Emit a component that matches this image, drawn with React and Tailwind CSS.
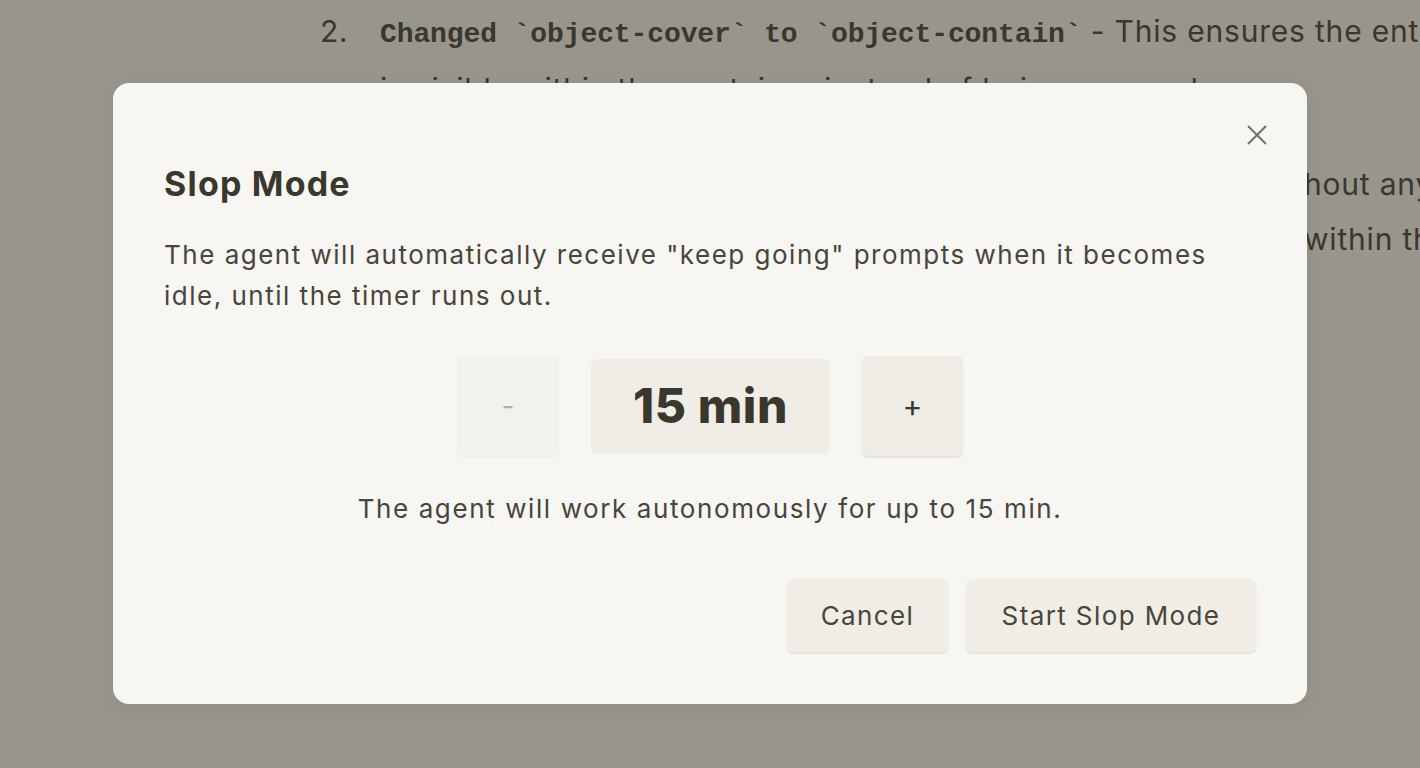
import React, { useState } from 'react';

const sans = { fontFamily: 'Inter, "Open Sans", sans-serif' };
const mono = { fontFamily: '"Liberation Mono", monospace' };

// document behind the modal; only the edges peek out
const BackgroundDoc = () => (
  <div className="pt-[4px] pl-[320px] text-[30px] leading-[55px] text-[#3a372c] whitespace-nowrap tracking-[0.8px]" style={sans}>
    <div className="flex">
      <span className="w-[60px] shrink-0">2.</span>
      <span>
        <span className="font-bold tracking-[-0.1px] text-[28px]" style={mono}>
          Changed `object-cover` to `object-contain`
        </span>{' '}
        - This ensures the entire image
      </span>
    </div>
    <div className="pl-[60px]">is visible within the container instead of being cropped.</div>
    <div className="mt-[40px] flex">
      <span className="w-[60px] shrink-0">3.</span>
      <span className="w-[924px] shrink-0 overflow-hidden">Added max-height constraint - The image now displays fully wit</span>
      <span>hout any distortion</span>
    </div>
    <div className="flex pl-[60px]">
      <span className="w-[924px] shrink-0 overflow-hidden">and the whole preview stays</span>
      <span>within the card.</span>
    </div>
  </div>
);

const StepButton = ({ children, disabled, onClick }) => (
  <button
    onClick={onClick}
    disabled={disabled}
    className={
      disabled
        ? 'w-[102px] h-[100px] rounded-[6px] bg-[#f3f1ed] text-[#b3b0a9] text-[28px] shadow-[0_1px_2px_rgba(0,0,0,0.04)]'
        : 'w-[101px] h-[100px] rounded-[6px] bg-[#efece6] text-[#3a372c] text-[30px] shadow-[0_2px_2px_rgba(0,0,0,0.08)]'
    }
  >
    {children}
  </button>
);

export default function App() {
  const [minutes, setMinutes] = useState(15);

  return (
    <div className="relative h-[768px] w-[1420px] overflow-hidden bg-[#98958d]">
      <BackgroundDoc />

      {/* modal */}
      <div className="absolute inset-0 flex justify-center pt-[83px]">
        <div
          className="relative w-[1194px] h-[621px] rounded-[16px] bg-[#f7f6f3] px-[51px] pt-[80px] text-[#48453a] shadow-[0_4px_16px_rgba(0,0,0,0.06)]"
          style={sans}
        >
          <button className="absolute right-[39px] top-[41px] w-[22px] h-[22px] text-[#72706a]">
            <svg viewBox="0 0 22 22" className="w-[22px] h-[22px]" fill="none" stroke="currentColor" strokeWidth="2">
              <path d="M2 2L20 20M20 2L2 20" />
            </svg>
          </button>

          <h2 className="text-[34px] leading-[42px] font-bold text-[#3a372c] tracking-[1.2px]">Slop Mode</h2>

          <p className="mt-[29px] text-[26px] leading-[41px] tracking-[1.5px]">
            The agent will automatically receive "keep going" prompts when it becomes idle, until the timer runs out.
          </p>

          <div className="mt-[40px] flex items-center justify-center gap-[32px]">
            <StepButton disabled={minutes <= 15} onClick={() => setMinutes(m => m - 5)}>-</StepButton>
            <div className="w-[239px] h-[95px] rounded-[6px] bg-[#f0ede6] flex items-center justify-center text-[48px] font-extrabold text-[#3a372c] tracking-[0.6px]">
              {minutes} min
            </div>
            <StepButton onClick={() => setMinutes(m => m + 5)}>+</StepButton>
          </div>

          <p className="mt-[32px] text-center text-[26px] leading-[41px] tracking-[1.6px]">
            The agent will work autonomously for up to {minutes} min.
          </p>

          <div className="mt-[50px] flex justify-end gap-[18px]">
            <button className="w-[161px] h-[73px] rounded-[6px] bg-[#f0ede6] text-[26px] text-[#48453a] tracking-[1.4px] shadow-[0_2px_2px_rgba(0,0,0,0.08)]">
              Cancel
            </button>
            <button className="w-[290px] h-[73px] rounded-[6px] bg-[#f0ede6] text-[26px] text-[#48453a] tracking-[1.4px] shadow-[0_2px_2px_rgba(0,0,0,0.08)]">
              Start Slop Mode
            </button>
          </div>
        </div>
      </div>
    </div>
  );
}
